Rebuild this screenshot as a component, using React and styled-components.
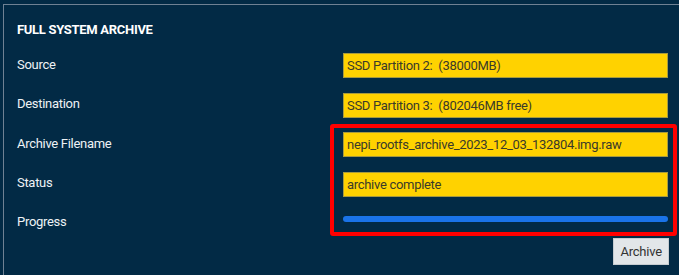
import React from 'react';
import styled, { createGlobalStyle } from 'styled-components';

const GlobalStyle = createGlobalStyle`
  html, body {
    margin: 0;
    padding: 0;
    background: #022a45;
    overflow: hidden;
  }
  body {
    font-family: Roboto, "Liberation Sans", sans-serif;
  }
`;

const Page = styled.div`
  width: 679px;
  height: 275px;
  padding: 4px 0 0 3px;
  box-sizing: border-box;
  position: relative;
  overflow: hidden;
`;

const Panel = styled.section`
  width: 720px;
  height: 300px;
  border-top: 1px solid #6f8193;
  border-left: 1px solid #6f8193;
  box-sizing: border-box;
  padding: 12px 0 0 13px;
  background: #022a45;
  letter-spacing: -0.3px;
`;

const Title = styled.h2`
  margin: 0;
  height: 26px;
  line-height: 26px;
  font-size: 13px;
  font-weight: 700;
  color: #ffffff;
`;

const Form = styled.div`
  display: grid;
  grid-template-columns: 326px 325px;
  grid-auto-rows: 25px;
  row-gap: 14.5px;
  margin-top: 10px;
`;

const Label = styled.div`
  display: flex;
  align-items: center;
  font-size: 13px;
  color: #eef2f5;
  padding-bottom: ${p => (p.$short ? '0' : '3px')};
  ${p => p.$short && 'height: 16px; padding-top: 2px;'}
`;

const Field = styled.div`
  display: flex;
  align-items: center;
  background: #ffd200;
  border: 1px solid #a89a3e;
  box-sizing: border-box;
  padding: 0 3px;
  font-size: 13px;
  color: #3a3a2a;
  white-space: pre;
  overflow: hidden;
`;

const BarRow = styled.div`
  display: flex;
  align-items: center;
  height: 16px;
`;

const Bar = styled.div`
  width: 100%;
  height: 6px;
  border-radius: 3px;
  background: #1a73e8;
`;

const Footer = styled.div`
  width: 652px;
  display: flex;
  justify-content: flex-end;
  margin-top: 2px;
`;

const Button = styled.button`
  box-sizing: border-box;
  height: 27px;
  padding: 0 6px;
  background: #e2e6e9;
  border: 1px solid #c6ccd1;
  font-family: inherit;
  font-size: 13px;
  letter-spacing: -0.2px;
  color: #333;
`;

const Highlight = styled.div`
  position: absolute;
  left: 330px;
  top: 124px;
  width: 347px;
  height: 112px;
  border: 4px solid #ff0000;
  border-radius: 3px;
  box-sizing: border-box;
  pointer-events: none;
`;

const rows = [
  ['Source', 'SSD Partition 2:  (38000MB)'],
  ['Destination', 'SSD Partition 3:  (802046MB free)'],
  ['Archive Filename', 'nepi_rootfs_archive_2023_12_03_132804.img.raw'],
  ['Status', 'archive complete'],
];

export default function App() {
  return (
    <Page>
      <GlobalStyle />
      <Panel>
        <Title>FULL SYSTEM ARCHIVE</Title>
        <Form>
          {rows.map(([label, value]) => (
            <React.Fragment key={label}>
              <Label>{label}</Label>
              <Field>{value}</Field>
            </React.Fragment>
          ))}
          <Label $short>Progress</Label>
          <BarRow>
            <Bar />
          </BarRow>
        </Form>
        <Footer>
          <Button>Archive</Button>
        </Footer>
      </Panel>
      <Highlight />
    </Page>
  );
}
